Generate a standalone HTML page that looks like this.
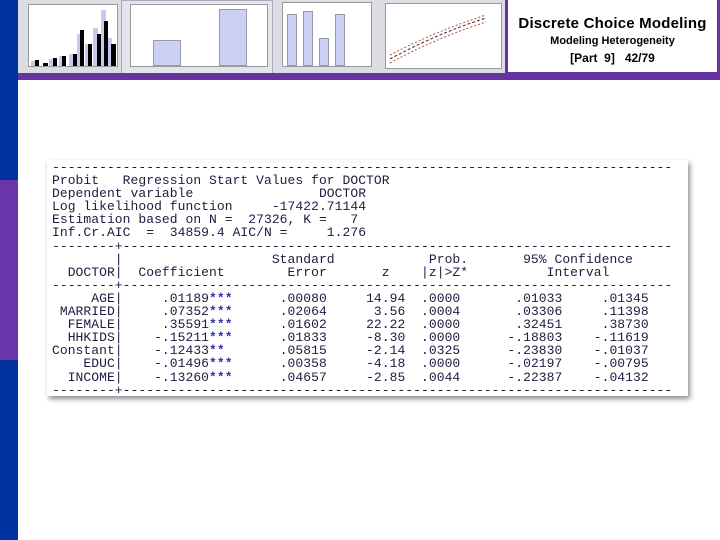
<!DOCTYPE html>
<html><head><meta charset="utf-8"><style>
body{margin:0;width:720px;height:540px;overflow:hidden;background:#fff;position:relative;font-family:"Liberation Sans",sans-serif}
.abs{position:absolute}
pre{margin:0;font-family:"Liberation Mono",monospace;font-size:13px;line-height:13.1px;color:#1c1c40;letter-spacing:0.05px}
.s{color:#3333aa;font-weight:bold}
.th{background:#dcdce4;border:1px solid #b8b8c8}
.pl{position:absolute;background:#fff;border:1px solid #999}
.b{position:absolute;bottom:0}
</style></head><body>
<div class="abs" style="left:0;top:0;width:18px;height:540px;background:#0033a0"></div>
<div class="abs" style="left:0;top:180px;width:18px;height:180px;background:#6a35a8"></div>
<div class="abs" style="left:18px;top:0;width:488px;height:74px;background:#dcdce4"></div>
<div class="pl" style="left:28px;top:4px;width:88px;height:61px">
 <div class="b" style="left:2px;width:6px;height:5px;background:#c8c8ee"></div><div class="b" style="left:6px;width:4px;height:6px;background:#000"></div>
 <div class="b" style="left:14px;width:5px;height:3px;background:#000"></div>
 <div class="b" style="left:20px;width:5px;height:7px;background:#c8c8ee"></div><div class="b" style="left:24px;width:4px;height:8px;background:#000"></div>
 <div class="b" style="left:30px;width:5px;height:10px;background:#c8c8ee"></div><div class="b" style="left:33px;width:4px;height:10px;background:#000"></div>
 <div class="b" style="left:40px;width:5px;height:12px;background:#c8c8ee"></div><div class="b" style="left:44px;width:4px;height:12px;background:#000"></div>
 <div class="b" style="left:48px;width:5px;height:32px;background:#c8c8ee"></div><div class="b" style="left:51px;width:4px;height:36px;background:#000"></div>
 <div class="b" style="left:56px;width:5px;height:22px;background:#c8c8ee"></div><div class="b" style="left:59px;width:4px;height:22px;background:#000"></div>
 <div class="b" style="left:64px;width:5px;height:38px;background:#c8c8ee"></div><div class="b" style="left:68px;width:4px;height:32px;background:#000"></div>
 <div class="b" style="left:72px;width:5px;height:56px;background:#c8c8ee"></div><div class="b" style="left:75px;width:4px;height:45px;background:#000"></div>
 <div class="b" style="left:79px;width:4px;height:28px;background:#c8c8ee"></div><div class="b" style="left:82px;width:5px;height:22px;background:#000"></div>
</div>
<div class="abs" style="left:121px;top:0;width:150px;height:74px;border:1px solid #aab;background:#e4e4ec"></div>
<div class="pl" style="left:130px;top:4px;width:136px;height:61px">
 <div class="b" style="left:22px;width:26px;height:24px;background:#ccd0f4;border:1px solid #99a"></div>
 <div class="b" style="left:88px;width:26px;height:55px;background:#ccd0f4;border:1px solid #99a"></div>
</div>
<div class="pl" style="left:282px;top:2px;width:88px;height:63px">
 <div class="b" style="left:4px;width:8px;height:50px;background:#ccd0f4;border:1px solid #99a"></div>
 <div class="b" style="left:20px;width:8px;height:53px;background:#ccd0f4;border:1px solid #99a"></div>
 <div class="b" style="left:36px;width:8px;height:26px;background:#ccd0f4;border:1px solid #99a"></div>
 <div class="b" style="left:52px;width:8px;height:50px;background:#ccd0f4;border:1px solid #99a"></div>
</div>
<div class="pl" style="left:385px;top:3px;width:115px;height:64px">
 <svg width="115" height="64" class="abs" style="left:0;top:0"><path d="M4 55 Q50 30 100 14" stroke="#333" stroke-dasharray="3 2" fill="none"/><path d="M4 51 Q50 27 100 11" stroke="#c44" stroke-dasharray="2 2" fill="none"/><path d="M4 59 Q50 34 100 18" stroke="#c44" stroke-dasharray="2 2" fill="none"/></svg>
</div>
<div class="abs" style="left:18px;top:73px;width:702px;height:7px;background:#6633a0"></div>
<div class="abs" style="left:505px;top:0;width:209px;height:72px;background:#fff;border:3px solid #6633a0;border-top:none;text-align:center;color:#000">
 <div style="font-weight:bold;font-size:15px;margin-top:15px;letter-spacing:0.2px">Discrete Choice Modeling</div>
 <div style="font-size:11px;font-weight:bold;margin-top:3px">Modeling Heterogeneity</div>
 <div style="font-size:12px;font-weight:bold;margin-top:4px">[Part&nbsp; 9]&nbsp;&nbsp; 42/79</div>
</div>
<div class="abs" style="left:47px;top:160px;width:641px;height:236px;background:#fff;box-shadow:2px 3px 5px rgba(0,0,0,0.45)"></div>
<pre class="abs" style="left:52px;top:161px">-------------------------------------------------------------------------------
Probit   Regression Start Values for DOCTOR
Dependent variable                DOCTOR
Log likelihood function     -17422.71144
Estimation based on N =  27326, K =   7
Inf.Cr.AIC  =  34859.4 AIC/N =     1.276
--------+----------------------------------------------------------------------
        |                   Standard            Prob.       95% Confidence
  DOCTOR|  Coefficient        Error       z    |z|>Z*          Interval
--------+----------------------------------------------------------------------
     AGE|     .01189<span class="s">***</span>      .00080     14.94  .0000       .01033     .01345
 MARRIED|     .07352<span class="s">***</span>      .02064      3.56  .0004       .03306     .11398
  FEMALE|     .35591<span class="s">***</span>      .01602     22.22  .0000       .32451     .38730
  HHKIDS|    -.15211<span class="s">***</span>      .01833     -8.30  .0000      -.18803    -.11619
Constant|    -.12433<span class="s">**</span>       .05815     -2.14  .0325      -.23830    -.01037
    EDUC|    -.01496<span class="s">***</span>      .00358     -4.18  .0000      -.02197    -.00795
  INCOME|    -.13260<span class="s">***</span>      .04657     -2.85  .0044      -.22387    -.04132
--------+----------------------------------------------------------------------</pre>
</body></html>
